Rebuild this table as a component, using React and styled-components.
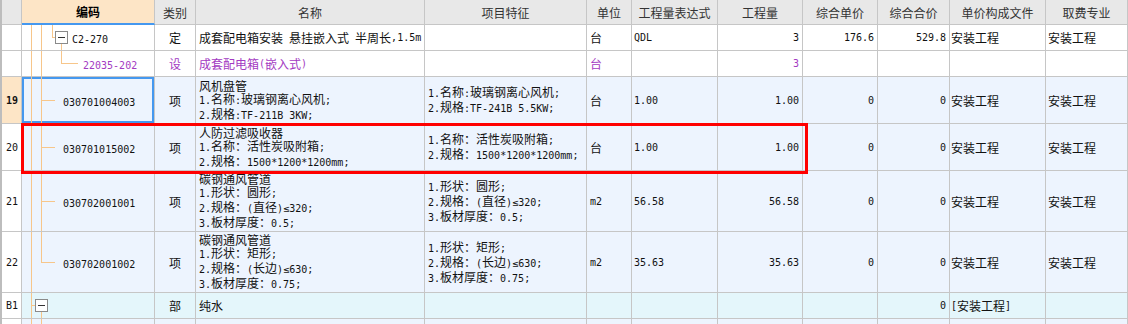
import React from "react";
import styled, { createGlobalStyle } from "styled-components";

const GlobalStyle = createGlobalStyle`
  html, body {
    margin: 0;
    padding: 0;
    overflow: hidden;
    background: #ffffff;
  }
  body {
    font-family: "Noto Sans CJK SC", "Noto Sans", sans-serif;
    font-size: 12px;
    color: #111;
  }
`;

const COLS = "20px 133px 41px 229px 162px 45px 86px 85px 75px 72px 96px 82px";
const LINE = "#f7c68a";
const GRID = "#c6c6c6";
const PURPLE = "#a33ac2";

const Table = styled.div`
  width: 1128px;
  box-sizing: border-box;
  border-left: 2px solid #bdbdbd;
`;

const Row = styled.div`
  position: relative;
  display: grid;
  grid-template-columns: ${COLS};
  height: ${(p) => p.$h}px;
  background: ${(p) => p.$bg || "#ffffff"};
`;

const Cell = styled.div`
  display: flex;
  align-items: center;
  justify-content: ${(p) =>
    p.$align === "right" ? "flex-end" : p.$align === "center" ? "center" : "flex-start"};
  box-sizing: border-box;
  padding: 0 ${(p) => (p.$pad != null ? p.$pad : 3)}px;
  border-right: 1px solid ${GRID};
  border-bottom: 1px solid ${GRID};
  overflow: hidden;
  white-space: nowrap;
  color: ${(p) => p.$color || "inherit"};
  font-weight: ${(p) => (p.$bold ? 700 : 400)};
  ${(p) => p.$bg && `background: ${p.$bg};`}
`;

const HeadCell = styled(Cell)`
  justify-content: center;
  background: ${(p) => (p.$hot ? "#fde5c6" : "#e8e8e8")};
  color: ${(p) => (p.$hot ? "#000" : "#333")};
  ${(p) => p.$hot && "border-bottom: 2px solid #4598ef;"}
`;

const NumCell = styled(Cell)`
  padding-left: 4px;
  background: ${(p) => (p.$hot ? "#fde5c6" : "#ffffff")};
  font-weight: ${(p) => (p.$hot ? 700 : 400)};
`;

const CodeCell = styled(Cell)`
  align-items: stretch;
  padding: 0;
  ${(p) => p.$focus && "box-shadow: inset 0 0 0 2px #4598ef;"}
`;

const CodeText = styled.span`
  align-self: center;
  color: ${(p) => p.$color || "inherit"};
`;

const Lines = styled.div`
  display: flex;
  flex-direction: column;
  line-height: 13px;
`;

const Lat = styled.span`
  font-family: "DejaVu Sans Mono", "Liberation Mono", monospace;
  font-size: 10px;
  white-space: pre;
`;

const vert = (h) => `linear-gradient(${LINE}, ${LINE}) 0 0 / 1px ${h} no-repeat`;
const horz = `linear-gradient(${LINE}, ${LINE}) 0 50% / 100% 1px no-repeat`;

const Guide = styled.span`
  flex: none;
  width: ${(p) => p.$w}px;
  background: ${(p) =>
    p.$kind === "rail"
      ? vert("100%")
      : p.$kind === "tee"
      ? `${vert("100%")}, ${horz}`
      : p.$kind === "elbow"
      ? `${vert("50%")}, ${horz}`
      : "none"};
`;

const ToggleCol = styled.span`
  flex: none;
  width: 13px;
  display: flex;
  flex-direction: column;
`;

const Filler = styled.span`
  flex: 1;
  background: ${(p) =>
    p.$line ? `linear-gradient(${LINE}, ${LINE}) 6px 0 / 1px 100% no-repeat` : "none"};
`;

const Toggle = styled.span`
  flex: none;
  width: 13px;
  height: 13px;
  box-sizing: border-box;
  border: 1px solid #8a8a8a;
  background: #fff;
  display: flex;
  align-items: center;
  justify-content: center;
  &::before {
    content: "";
    width: 7px;
    height: 1px;
    background: #333;
  }
`;

const Marker = styled.div`
  position: absolute;
  left: 19px;
  top: -1px;
  width: 787px;
  height: 51px;
  box-sizing: border-box;
  border: 3px solid #ff0000;
  pointer-events: none;
  z-index: 2;
`;

const Txt = ({ s }) =>
  String(s)
    .split(/([\x20-\x7e\u2264]+)/)
    .filter(Boolean)
    .map((p, i) =>
      /^[\x20-\x7e\u2264]+$/.test(p) ? <Lat key={i}>{p}</Lat> : <React.Fragment key={i}>{p}</React.Fragment>
    );

const Content = ({ v }) =>
  Array.isArray(v) ? (
    <Lines>
      {v.map((l, i) => (
        <div key={i}>
          <Txt s={l} />
        </div>
      ))}
    </Lines>
  ) : v ? (
    <Txt s={v} />
  ) : null;

const Tree = ({ parts }) =>
  parts.map(([kind, w], i) =>
    kind === "box" ? (
      <ToggleCol key={i}>
        <Filler />
        <Toggle />
        <Filler $line={w} />
      </ToggleCol>
    ) : (
      <Guide key={i} $kind={kind} $w={w} />
    )
  );

const HEAD = ["", "编码", "类别", "名称", "项目特征", "单位", "工程量表达式", "工程量", "综合单价", "综合合价", "单价构成文件", "取费专业"];

const BLUE = "#edf4fe";
const CYAN = "#e4f6fb";

const tee = [["pad", 9], ["rail", 10], ["tee", 14], ["pad", 8]];

const rows = [
  {
    h: 26,
    tree: [["pad", 9], ["rail", 10], ["rail", 11], ["elbow", 3], ["box", true], ["pad", 4]],
    code: "C2-270",
    kind: "定",
    name: "成套配电箱安装 悬挂嵌入式 半周长,1.5m",
    feat: "",
    unit: "台",
    expr: "QDL",
    qty: "3",
    price: "176.6",
    total: "529.8",
    file: "安装工程",
    spec: "安装工程",
  },
  {
    h: 26,
    color: PURPLE,
    tree: [["pad", 9], ["rail", 10], ["rail", 11], ["pad", 9], ["elbow", 17], ["pad", 5]],
    code: "22035-202",
    kind: "设",
    name: "成套配电箱(嵌入式)",
    feat: "",
    unit: "台",
    expr: "",
    qty: "3",
  },
  {
    h: 47,
    bg: BLUE,
    num: "19",
    hot: true,
    focus: true,
    tree: tee,
    code: "030701004003",
    kind: "项",
    name: ["风机盘管", "1.名称:玻璃钢离心风机;", "2.规格:TF-211B 3KW;"],
    feat: ["1.名称:玻璃钢离心风机;", "2.规格:TF-241B 5.5KW;"],
    unit: "台",
    expr: "1.00",
    qty: "1.00",
    price: "0",
    total: "0",
    file: "安装工程",
    spec: "安装工程",
  },
  {
    h: 47,
    bg: BLUE,
    num: "20",
    marked: true,
    tree: tee,
    code: "030701015002",
    kind: "项",
    name: ["人防过滤吸收器", "1.名称：活性炭吸附箱;", "2.规格：1500*1200*1200mm;"],
    feat: ["1.名称：活性炭吸附箱;", "2.规格：1500*1200*1200mm;"],
    unit: "台",
    expr: "1.00",
    qty: "1.00",
    price: "0",
    total: "0",
    file: "安装工程",
    spec: "安装工程",
  },
  {
    h: 61,
    bg: BLUE,
    num: "21",
    tree: tee,
    code: "030702001001",
    kind: "项",
    name: ["碳钢通风管道", "1.形状：圆形;", "2.规格：(直径)≤320;", "3.板材厚度：0.5;"],
    feat: ["1.形状：圆形;", "2.规格：(直径)≤320;", "3.板材厚度：0.5;"],
    unit: "m2",
    expr: "56.58",
    qty: "56.58",
    price: "0",
    total: "0",
    file: "安装工程",
    spec: "安装工程",
  },
  {
    h: 61,
    bg: BLUE,
    num: "22",
    tree: [["pad", 9], ["rail", 10], ["elbow", 14], ["pad", 8]],
    code: "030702001002",
    kind: "项",
    name: ["碳钢通风管道", "1.形状：矩形;", "2.规格：(长边)≤630;", "3.板材厚度：0.75;"],
    feat: ["1.形状：矩形;", "2.规格：(长边)≤630;", "3.板材厚度：0.75;"],
    unit: "m2",
    expr: "35.63",
    qty: "35.63",
    price: "0",
    total: "0",
    file: "安装工程",
    spec: "安装工程",
  },
  {
    h: 26,
    bg: CYAN,
    num: "B1",
    tree: [["pad", 9], ["tee", 4], ["box", true]],
    code: "",
    kind: "部",
    name: "纯水",
    total: "0",
    file: "[安装工程]",
  },
  {
    h: 26,
    bg: BLUE,
    tree: [["pad", 9], ["rail", 10], ["rail", 10]],
    code: "",
  },
];

export default function App() {
  return (
    <>
      <GlobalStyle />
      <Table>
        <Row $h={25}>
          {HEAD.map((t, i) => (
            <HeadCell key={i} $hot={i === 1} $bold={i === 1}>
              {t}
            </HeadCell>
          ))}
        </Row>
        {rows.map((r, i) => (
          <Row key={i} $h={r.h} $bg={r.bg}>
            <NumCell $hot={r.hot}>
              <Content v={r.num} />
            </NumCell>
            <CodeCell $focus={r.focus}>
              <Tree parts={r.tree} />
              <CodeText $color={r.color}>
                <Content v={r.code} />
              </CodeText>
            </CodeCell>
            <Cell $align="center" $color={r.color}>
              <Content v={r.kind} />
            </Cell>
            <Cell $color={r.color}>
              <Content v={r.name} />
            </Cell>
            <Cell>
              <Content v={r.feat} />
            </Cell>
            <Cell $color={r.color}>
              <Content v={r.unit} />
            </Cell>
            <Cell $pad={2}>
              <Content v={r.expr} />
            </Cell>
            <Cell $align="right" $color={r.color}>
              <Content v={r.qty} />
            </Cell>
            <Cell $align="right">
              <Content v={r.price} />
            </Cell>
            <Cell $align="right">
              <Content v={r.total} />
            </Cell>
            <Cell $pad={1}>
              <Content v={r.file} />
            </Cell>
            <Cell $pad={2}>
              <Content v={r.spec} />
            </Cell>
            {r.marked && <Marker />}
          </Row>
        ))}
      </Table>
    </>
  );
}
